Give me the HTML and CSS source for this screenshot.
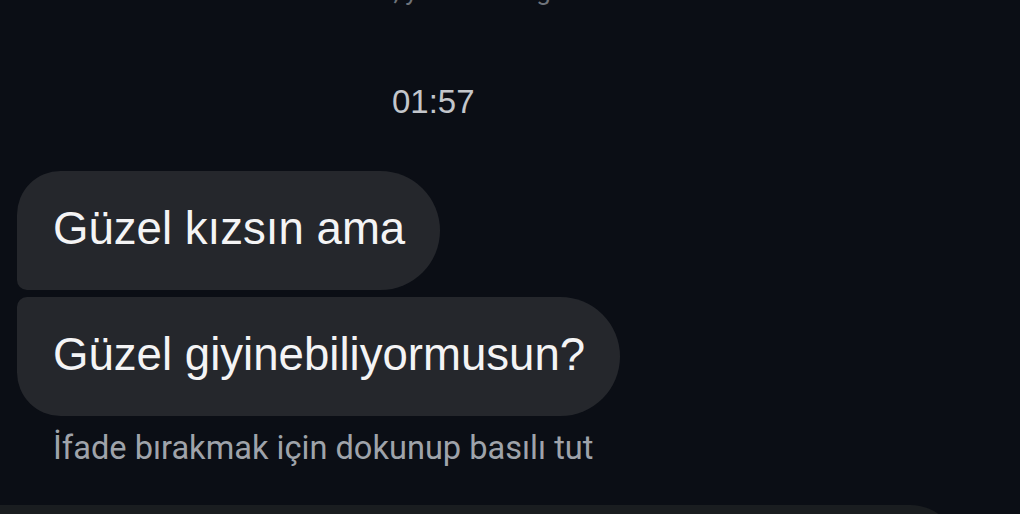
FILE: index.html
```html
<!DOCTYPE html>
<html lang="tr">
<head>
<meta charset="utf-8">
<link rel="stylesheet" href="styles.css">
</head>
<body>
<div class="chat">
  <div class="prev">Sen, yanıtladın · görüldü</div>
  <div class="time">01:57</div>
  <div class="group">
    <div class="bubble first">Güzel kızsın ama</div>
    <div class="bubble last">Güzel giyinebiliyormusun?</div>
  </div>
  <div class="hint">İfade bırakmak için dokunup basılı tut</div>
  <div class="composer"></div>
</div>
</body>
</html>
```
FILE: styles.css
```css
html, body {
  margin: 0;
  padding: 0;
  background: #0b0e15;
}
.chat {
  width: 1020px;
  height: 514px;
  overflow: hidden;
  display: flex;
  flex-direction: column;
  font-family: "Liberation Sans", Arial, sans-serif;
}
.prev {
  margin-top: -24px;
  height: 30px;
  line-height: 30px;
  font-size: 26px;
  color: #6f737a;
  padding-left: 350px;
  font-family: Roboto, sans-serif;
}
.time {
  margin-top: 76px;
  height: 40px;
  line-height: 40px;
  font-size: 33px;
  color: #c3c6cb;
  padding-left: 392px;
}
.group {
  margin-top: 49px;
  display: flex;
  flex-direction: column;
  align-items: flex-start;
  gap: 7px;
  padding-left: 17px;
}
.bubble {
  background: #25272c;
  color: #f4f4f5;
  font-size: 45.6px;
  height: 119px;
  line-height: 115px;
  padding: 0 35px 0 36px;
  box-sizing: border-box;
  white-space: nowrap;
}
.bubble.first {
  border-radius: 44px 60px 60px 10px;
}
.bubble.last {
  border-radius: 10px 60px 60px 44px;
}
.hint {
  margin-top: 13px;
  height: 38px;
  line-height: 38px;
  font-family: Roboto, sans-serif;
  font-size: 32.6px;
  color: #9fa3aa;
  padding-left: 53px;
}
.composer {
  margin-top: 38px;
  width: 960px;
  height: 80px;
  flex: none;
  background: #1a1d20;
  border-radius: 0 50px 0 0;
}
```
